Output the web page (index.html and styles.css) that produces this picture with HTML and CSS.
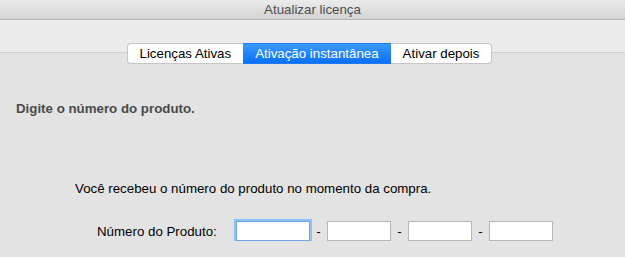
FILE: index.html
```html
<!DOCTYPE html>
<html lang="pt">
<head>
    <meta charset="UTF-8">
    <title>Atualizar licença</title>
    <link rel="stylesheet" href="styles.css">
</head>
<body>
    <div class="titlebar">Atualizar licença</div>
    <div class="toolbar"></div>
    <div class="tabs">
        <span class="tab">Licenças Ativas</span>
        <span class="tab active">Ativação instantânea</span>
        <span class="tab">Ativar depois</span>
    </div>
    <div class="content">
        <p class="prompt">Digite o número do produto.</p>
        <p class="hint">Você recebeu o número do produto no momento da compra.</p>
        <div class="serial-row">
            <label class="serial-label">Número do Produto:</label>
            <input class="serial first" type="text">
            <span class="dash">-</span>
            <input class="serial" type="text">
            <span class="dash">-</span>
            <input class="serial" type="text">
            <span class="dash">-</span>
            <input class="serial" type="text">
        </div>
    </div>
</body>
</html>
```

FILE: styles.css
```css
body {
    margin: 0;
    background-color: #e3e3e3;
    font-family: "Liberation Sans", Arial, sans-serif;
    font-size: 13.3px;
    color: #000;
    overflow: hidden;
}
.titlebar {
    height: 19px;
    line-height: 20px;
    text-align: center;
    color: #4d4d4d;
    background: linear-gradient(#ebebeb, #d3d3d3);
    border-bottom: 1px solid #b1b1b1;
}
.toolbar {
    height: 32px;
    background-color: #ececec;
    border-bottom: 1px solid #d2d2d2;
}
.tabs {
    display: flex;
    justify-content: center;
    margin-top: -10px;
    padding-right: 6px;
}
.tab {
    height: 19px;
    line-height: 20px;
    padding: 0 12px;
    background: #fff;
    border: 1px solid #c6c6c6;
    border-left: none;
    border-right: none;
}
.tab:first-child {
    border-left: 1px solid #c6c6c6;
    border-radius: 4px 0 0 4px;
}
.tab:last-child {
    border-right: 1px solid #c6c6c6;
    border-radius: 0 4px 4px 0;
}
.tab.active {
    background: linear-gradient(#3a9bfc, #0a6ff7);
    border-color: #1d7cf5;
    color: #fff;
}
.content {
    padding: 0 16px;
}
.prompt {
    margin: 37px 0 0;
    font-weight: bold;
    color: #4a4a4a;
}
.hint {
    margin: 65px 0 0 59px;
}
.serial-row {
    display: flex;
    align-items: center;
    margin: 25px 0 0 81px;
}
.serial-label {
    width: 139px;
}
.serial {
    width: 60px;
    height: 16px;
    padding: 1px;
    border: 1px solid #b7b7b7;
    background: #fff;
    margin: 0;
    outline: none;
}
.serial.first {
    width: 70px;
    border-color: #6fa8e8;
    box-shadow: 0 0 0 2px #8ebff6;
}
.dash {
    width: 17px;
    text-align: center;
}
```
